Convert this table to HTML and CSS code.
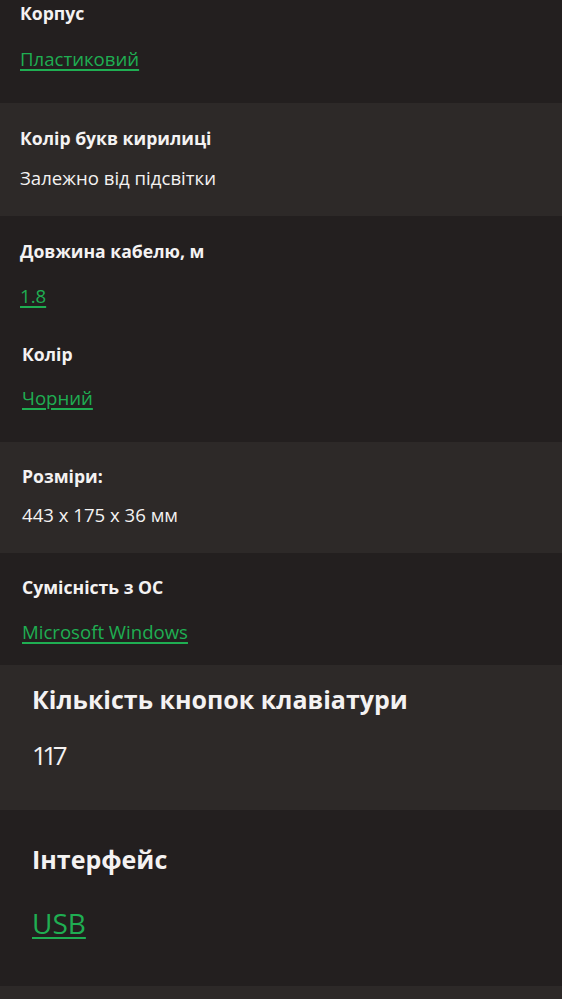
FILE: index.html
```html
<!DOCTYPE html>
<html lang="uk">
<head>
<meta charset="utf-8">
<title>Характеристики</title>
<link rel="stylesheet" href="styles.css">
</head>
<body>
<div class="specs">
  <section class="row dark r1">
    <div class="item">
      <div class="name">Корпус</div>
      <a class="val link" href="#">Пластиковий</a>
    </div>
  </section>
  <section class="row light r2">
    <div class="item">
      <div class="name">Колір букв кирилиці</div>
      <div class="val">Залежно від підсвітки</div>
    </div>
  </section>
  <section class="row dark r3">
    <div class="item a">
      <div class="name">Довжина кабелю, м</div>
      <a class="val link" href="#">1.8</a>
    </div>
    <div class="item b">
      <div class="name">Колір</div>
      <a class="val link" href="#">Чорний</a>
    </div>
  </section>
  <section class="row light r4">
    <div class="item">
      <div class="name">Розміри:</div>
      <div class="val">443 x 175 x 36 мм</div>
    </div>
  </section>
  <section class="row dark r5">
    <div class="item">
      <div class="name">Сумісність з ОС</div>
      <a class="val link" href="#">Microsoft Windows</a>
    </div>
  </section>
  <section class="row light big r6">
    <div class="item">
      <div class="name">Кількість кнопок клавіатури</div>
      <div class="val num">117</div>
    </div>
  </section>
  <section class="row dark big r7">
    <div class="item">
      <div class="name">Інтерфейс</div>
      <a class="val link" href="#">USB</a>
    </div>
  </section>
  <section class="row light r8"></section>
</div>
</body>
</html>
```

FILE: styles.css
```css
* { box-sizing: border-box; }
html, body {
  margin: 0;
  padding: 0;
  background: #231f1f;
}
body {
  font-family: "Open Sans", "Noto Sans", sans-serif;
  color: #f4f2f2;
}
.specs {
  display: flex;
  flex-direction: column;
}
.row { display: flex; flex-direction: column; }
.dark { background: #231f1f; }
.light { background: #2d2928; }
.item { display: flex; flex-direction: column; align-items: flex-start; }
.name {
  font-size: 17.6px;
  line-height: 22px;
  font-weight: 700;
}
.val {
  font-size: 18.6px;
  line-height: 22px;
  font-weight: 400;
  color: #f4f2f2;
}
.link {
  color: #1fae52;
  text-decoration: underline;
  text-decoration-thickness: 2px;
  text-underline-offset: 3px;
}
.r1 { height: 103px; padding: 2px 20px 0; }
.r1 .val { margin-top: 24px; }
.r2 { height: 113px; padding: 24px 20px 0; }
.r2 .val { margin-top: 18px; }
.r3 { height: 226px; padding-top: 24px; }
.r3 .a { padding-left: 20px; }
.r3 .a .val { margin-top: 23px; }
.r3 .b { padding-left: 22px; margin-top: 36px; }
.r3 .b .val { margin-top: 22px; }
.r4 { height: 111px; padding: 23px 22px 0; }
.r4 .val { margin-top: 17px; }
.r5 { height: 112px; padding: 23px 22px 0; }
.r5 .val { margin-top: 23px; }
.big .name { font-size: 25px; line-height: 30px; }
.big .val { font-size: 26px; line-height: 32px; }
.num { letter-spacing: -4.5px; }
.r6 { height: 145px; padding: 19px 32px 0; }
.r6 .val { margin-top: 25px; }
.r7 { height: 176px; padding: 34px 32px 0; }
.r7 .val { font-size: 28px; line-height: 34px; margin-top: 32px; }
.r8 { height: 40px; }
```
